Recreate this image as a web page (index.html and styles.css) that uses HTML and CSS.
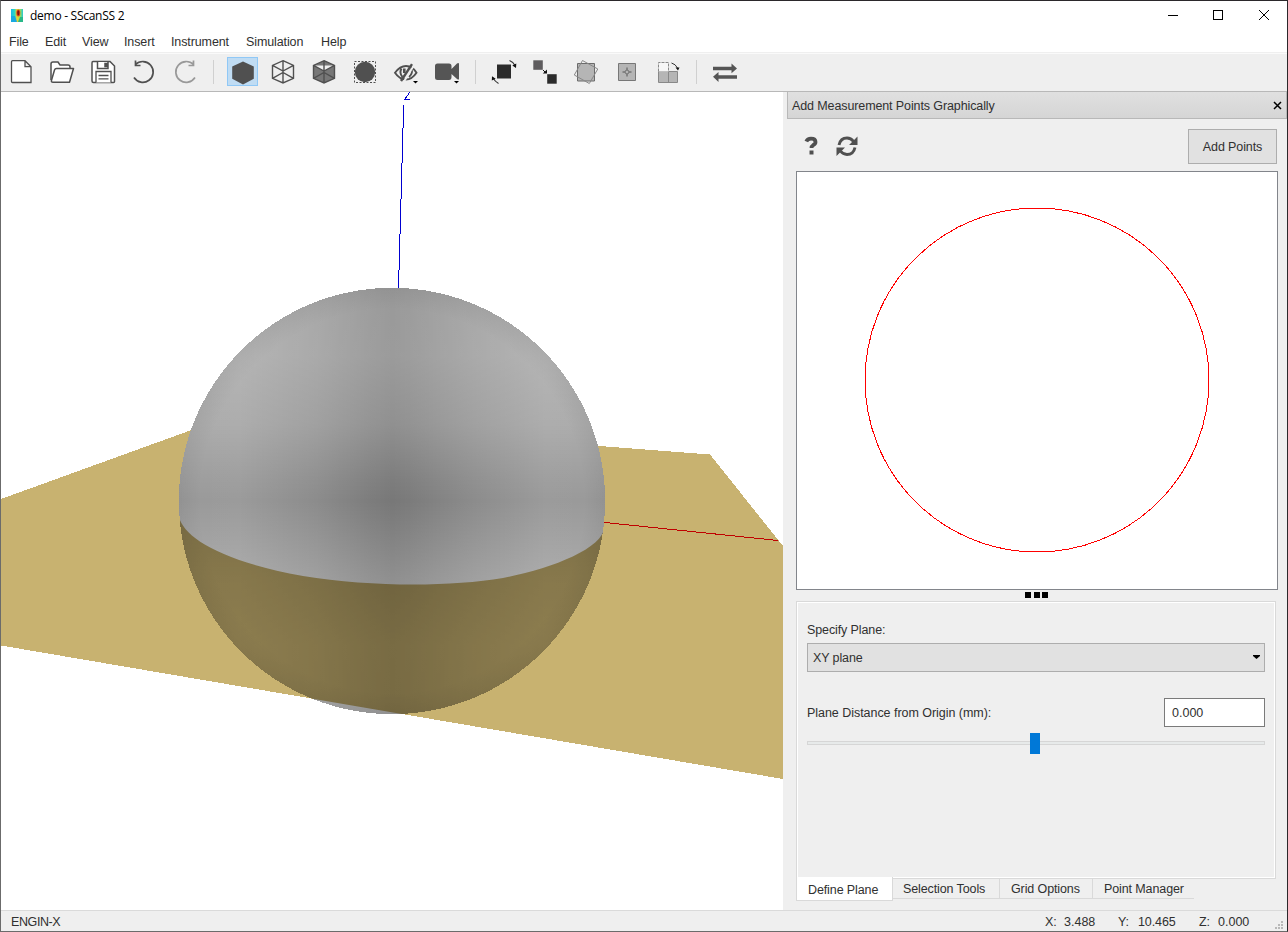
FILE: index.html
```html
<!DOCTYPE html>
<html lang="en">
<head>
<meta charset="utf-8">
<title>demo - SScanSS 2</title>
<link rel="stylesheet" href="styles.css">
</head>
<body>
<div class="window">
  <header class="titlebar">
    <svg class="app-icon" width="12" height="13" viewBox="0 0 12 13">
      <defs>
        <linearGradient id="heat"><stop offset="0" stop-color="#18b8e8"/><stop offset=".3" stop-color="#30d8c0"/><stop offset=".5" stop-color="#f0d030"/><stop offset=".75" stop-color="#a0e050"/><stop offset="1" stop-color="#20c8d8"/></linearGradient>
      </defs>
      <rect width="12" height="13" fill="url(#heat)"/>
      <path d="M0 7h4l2 6H0z" fill="#18a8e0"/><path d="M7 13l2-5h3v5z" fill="#28b888"/>
      <ellipse cx="7.3" cy="4" rx="2" ry="3.6" fill="#e85018"/><ellipse cx="7.3" cy="3.8" rx="1.1" ry="2.6" fill="#801010"/>
    </svg>
    <span class="title">demo - SScanSS 2</span>
    <svg class="controls" width="104" height="12" viewBox="0 0 104 12" fill="none" stroke="#000" shape-rendering="crispEdges">
      <path d="M1 6.500h10M46.500 1.500h9v9h-9z"/><path d="M92 1l10 10M102 1L92 11" shape-rendering="auto"/>
    </svg>
  </header>
  <nav class="menubar">
    <span class="m-file">File</span><span class="m-edit">Edit</span><span class="m-view">View</span><span class="m-insert">Insert</span><span class="m-instr">Instrument</span><span class="m-sim">Simulation</span><span>Help</span>
  </nav>
  <div class="toolbar">
    <svg class="tool" viewBox="0 0 31 29"><path d="M6.500 3.700H19l6 6V25.500H6.500q-1 0-1-1V4.700q0-1 1-1zM19 3.700v6h6" fill="#fff" stroke="#505050" stroke-width="1.300"/></svg>
    <svg class="tool" viewBox="0 0 31 29"><path d="M4 23V7q0-2 2-2h5l2 3h8q2 0 2 2v2" fill="#fff" stroke="#505050" stroke-width="1.500"/><path d="M9.500 11.500H26.500L22.500 25.200H6q-2 0-1.500-2L7.500 13q.5-1.500 2-1.500z" fill="#fff" stroke="#505050" stroke-width="1.500" stroke-linejoin="round"/></svg>
    <svg class="tool" viewBox="0 0 31 29"><g fill="#fff" stroke="#505050" stroke-width="1.500"><path d="M5 4.500h17l4.500 4.500v15.500q0 1-1 1h-20q-1.500 0-1.500-1.500V6q0-1.500 1-1.500z"/><path d="M9.500 5v6.500h10.500V5M17 6.500h1.500v3H17z"/><path d="M8 25.500V14.500h15v11M10.500 18.500h10M10.500 21.800h10" stroke-width="1.300"/></g></svg>
    <svg class="tool" viewBox="0 0 31 29"><path d="M6.500 7.500A10.400 10.400 0 1 1 5 20.500M6.500 3.500v5h5" fill="none" stroke="#505050" stroke-width="1.700"/></svg>
    <svg class="tool" viewBox="0 0 31 29"><path d="M23.500 7.500A10.400 10.400 0 1 0 25 20.500M23.500 3.500v5h-5" fill="none" stroke="#999" stroke-width="1.700"/></svg>
    <i class="sep"></i>
    <svg class="tool active" viewBox="0 0 31 29"><path d="M16 4.500l10.800 5v12.300L16 27.500 5.200 21.800V9.500z" fill="#505050"/></svg>
    <svg class="tool" viewBox="0 0 31 29"><path d="M15 3.700l10.500 4.700v13L15 26 4.500 21.400v-13zM15 3.700V26M4.500 8.400L15 14l10.500-5.600M4.500 21.400L15 15.500l10.500 5.900" fill="none" stroke="#505050" stroke-width="1.400"/></svg>
    <svg class="tool" viewBox="0 0 31 29"><path d="M15 3.700l10.500 4.700v13L15 26 4.500 21.400v-13zM15 3.700V26M4.500 8.400L15 14l10.500-5.600M4.500 21.400L15 15.500l10.500 5.900" fill="#777" stroke="#505050" stroke-width="1.400"/></svg>
    <svg class="tool" viewBox="0 0 31 29"><path d="M4.500 4.500h21v21h-21z" fill="none" stroke="#505050" stroke-dasharray="2 1.500"/><circle cx="15" cy="15" r="10.200" fill="#505050"/></svg>
    <svg class="tool" viewBox="0 0 31 29"><path d="M4 15.800Q9 9 15 9q6.500 0 10.500 6.800Q21 22.500 15 22.500 8.500 22.500 4 15.800zM10.500 11.500q-2.500 4.500 1 8.500M20 11.500q2.500 4.500-2 8.500" fill="none" stroke="#505050" stroke-width="1.900"/><path d="M13.300 11.500v4.500" stroke="#505050" stroke-width="2.600"/><path d="M13 24.500L22.500 9" stroke="#efefef" stroke-width="2"/><path d="M10 24L21 7.200" stroke="#505050" stroke-width="2.400"/><path d="M22 24h5l-2.500 2.500z" fill="#000"/></svg>
    <svg class="tool" viewBox="0 0 31 29"><path d="M5.500 6.500h11.500q2.500 0 2.500 2.500v3l5.500-5.500q2-1 2 .500v15q0 1-2 0l-5.500-5v3q0 3-2.500 3H5.500Q3 23 3 20.500V9q0-2.500 2.500-2.500z" fill="#555"/><path d="M22 24h5l-2.500 2.500z" fill="#000"/></svg>
    <i class="sep"></i>
    <svg class="tool" viewBox="0 0 31 29"><path d="M8 7.500h14v14H8z" fill="#2b2b2b"/><path d="M20.500 3.500q4 1.500 5.500 5M4 21q2 3.500 5.500 5.500" fill="none" stroke="#333" stroke-width="1.100"/><path d="M27.300 6.500l-.3 4.500-3.700-2.500zM2.800 23.500L3 19.200l3.700 2.500z" fill="#111"/></svg>
    <svg class="tool" viewBox="0 0 31 29"><path d="M3.300 3.300h9.500v9.500H3.300z" fill="#5e5c5e"/><path d="M17.200 17.200h9.500v9.500h-9.500z" fill="#2b2b2b"/><path d="M13 13l2 2" stroke="#111"/><path d="M17 12.500V16.500h-4.200z" fill="#111"/></svg>
    <svg class="tool" viewBox="0 0 31 29"><path d="M6.500 6.500h17v17.500h-17z" fill="#b5b5b5" stroke="#6b6b6b"/><path d="M11.500 3.500l15.300 8.500-8.500 14.500L3.300 18z" fill="none" stroke="#888"/></svg>
    <svg class="tool" viewBox="0 0 31 29"><path d="M6.500 6.500h17v17h-17z" fill="#b5b5b5" stroke="#777"/><path d="M15 10.500v3M15 16.500v3M10.500 15h3M16.500 15h3" stroke="#555"/><circle cx="15" cy="15" r="2" fill="none" stroke="#777"/></svg>
    <svg class="tool" viewBox="0 0 31 29"><path d="M5.500 14.500h19v11h-19z" fill="#b5b5b5" stroke="#888"/><path d="M5.500 14.500v-9h10v9" fill="#f6f6f6" stroke="#888" stroke-dasharray="3 1"/><path d="M15.500 15v10" stroke="#888"/><path d="M18.500 6q4 1 6 5" fill="none" stroke="#333"/><path d="M22.500 10.500h4L25 13.500z" fill="#111"/></svg>
    <i class="sep"></i>
    <svg class="tool" viewBox="0 0 31 29"><path d="M3 9.800h18.500V6.500L27 11.500l-5.500 4.700V13.300H3zM27 18.200H8.500V15L3 19.800 8.500 25v-3.300H27z" fill="#555"/></svg>
  </div>
  <main class="workspace">
    <svg class="scene" width="782" height="818" viewBox="1 92 782 818">
      <defs>
        <linearGradient id="sideLight" gradientUnits="userSpaceOnUse" x1="179" y1="0" x2="605" y2="0">
          <stop offset="0" stop-color="#fff" stop-opacity=".25"/><stop offset=".14" stop-color="#fff" stop-opacity=".26"/><stop offset=".32" stop-color="#fff" stop-opacity=".15"/><stop offset=".45" stop-color="#fff" stop-opacity=".035"/><stop offset=".5" stop-color="#fff" stop-opacity="0"/><stop offset=".54" stop-color="#fff" stop-opacity=".025"/><stop offset=".68" stop-color="#fff" stop-opacity=".14"/><stop offset=".86" stop-color="#fff" stop-opacity=".26"/><stop offset="1" stop-color="#fff" stop-opacity=".25"/>
        </linearGradient>
        <linearGradient id="topLight" gradientUnits="userSpaceOnUse" x1="0" y1="288" x2="0" y2="714">
          <stop offset="0" stop-color="#fff" stop-opacity=".25"/><stop offset=".16" stop-color="#fff" stop-opacity=".26"/><stop offset=".32" stop-color="#fff" stop-opacity=".18"/><stop offset=".45" stop-color="#fff" stop-opacity=".04"/><stop offset=".5" stop-color="#fff" stop-opacity="0"/><stop offset=".54" stop-color="#fff" stop-opacity=".035"/><stop offset=".68" stop-color="#fff" stop-opacity=".17"/><stop offset=".84" stop-color="#fff" stop-opacity=".25"/><stop offset="1" stop-color="#fff" stop-opacity=".24"/>
        </linearGradient>
        <radialGradient id="rim"><stop offset=".9" stop-color="#000" stop-opacity="0"/><stop offset="1" stop-color="#000" stop-opacity=".05"/></radialGradient>
        <clipPath id="front"><path d="M170 500L179 517C184 537 220 561 303 576C370 587 450 587 503 578C550 569 603 549 604.500 527L620 500V751.200L170 674.400z"/></clipPath>
      </defs>
      <path d="M1 499L244 411L600 446L710 454.500L783 546V779L1 645.500z" fill="#c8b270" shape-rendering="crispEdges"/>
      <path d="M600 522L778 540.500" stroke="#c00000" shape-rendering="crispEdges"/>
      <path d="M403.500 105v5L398.500 288M410 92L404.500 99.500h5.500" fill="none" stroke="#0000d0" shape-rendering="crispEdges"/>
      <g shape-rendering="crispEdges">
        <circle cx="392" cy="501" r="213.200" fill="#787878"/>
        <circle cx="392" cy="501" r="213.200" fill="url(#sideLight)"/>
        <circle cx="392" cy="501" r="213.200" fill="url(#topLight)"/>
        <circle cx="392" cy="501" r="213.200" fill="url(#rim)"/>
      </g>
      <circle class="plane-shade" cx="392" cy="501" r="213.200" fill="#c8b270" clip-path="url(#front)" shape-rendering="crispEdges"/>
    </svg>
    <aside class="dock">
      <div class="dock-title"><span>Add Measurement Points Graphically</span>
        <svg width="9" height="9" viewBox="0 0 9 9"><path d="M1 1l7 7M8 1L1 8" stroke="#000" stroke-width="1.500"/></svg>
      </div>
      <div class="dock-body">
        <div class="actions">
          <svg width="60" height="24" viewBox="0 0 60 24">
            <path d="M3.300 7.500Q4.500 4.700 8 4.700q4.500 0 4.500 3.300 0 1.800-2.200 3Q8.500 12.200 8.500 14" fill="none" stroke="#505050" stroke-width="3.800"/><path d="M6.500 16.500h4v4h-4z" fill="#505050"/>
            <path d="M36 11q1.500-7 8-7 4 0 6.500 3.500M52 13.500q-1.500 7-8 7-4 0-6.500-3.500" fill="none" stroke="#505050" stroke-width="2.900"/><path d="M54.500 2.500v8.500H46zM33.500 22v-8.500H42z" fill="#505050"/>
          </svg>
          <button class="add">Add Points</button>
        </div>
        <svg class="cross-section" width="480" height="417" viewBox="797 172 480 417"><circle cx="1037" cy="380" r="172" fill="none" stroke="#ff0000" shape-rendering="crispEdges"/></svg>
        <div class="grip"><i></i><i></i><i></i></div>
        <section class="pane">
          <label class="plane-label">Specify Plane:</label>
          <div class="select"><span>XY plane</span><svg width="7" height="4" viewBox="0 0 7 4"><path d="M0 0h7v1L3.500 4 0 1z"/></svg></div>
          <div class="distance"><label>Plane Distance from Origin (mm):</label><div class="field">0.000</div></div>
          <div class="slider"><div class="track"></div><div class="thumb"></div></div>
        </section>
        <div class="tabs"><span class="tab current">Define Plane</span><span class="tab t-sel">Selection Tools</span><span class="tab t-grid">Grid Options</span><span class="tab t-point">Point Manager</span></div>
      </div>
    </aside>
  </main>
  <footer class="status">
    <span class="instrument">ENGIN-X</span><span class="cx">X:</span><span class="vx">3.488</span><span class="cy">Y:</span><span class="vy">10.465</span><span class="cz">Z:</span><span class="vz">0.000</span>
    <svg width="9" height="9" viewBox="0 0 9 9" fill="#b8b8b8"><path d="M6 0h2v2H6zM3 3h2v2H3zM6 3h2v2H6zM0 6h2v2H0zM3 6h2v2H3zM6 6h2v2H6z"/></svg>
  </footer>
</div>
</body>
</html>
```
FILE: styles.css
```css
* { box-sizing: border-box; }
body { margin: 0; font: 12.5px/14px "Liberation Sans", Arial, sans-serif; letter-spacing: -.11px; color: #303030; }
svg { display: block; flex: none; }
.window { width: 1288px; height: 932px; display: flex; flex-direction: column; background: #efefef; border: 1px solid #2b282b; border-left-color: #6b6b6b; border-bottom-color: #6b6b6b; overflow: hidden; white-space: nowrap; }
.titlebar { height: 31px; background: #fff; display: flex; align-items: center; padding: 0 16px 2px 10px; flex: none; }
.title { font: 12px/16px "Open Sans", "Noto Sans", sans-serif; letter-spacing: -.27px; color: #000; margin-left: 7px; }
.controls { margin: -1px 0 0 auto; }
.menubar { height: 21px; background: #fff; border-bottom: 1px solid #efefef; box-shadow: 0 1px #fafafa; padding: 3px 0 0 8px; display: flex; flex: none; }
.m-file { width: 36px; } .m-edit { width: 37px; } .m-view { width: 42px; } .m-insert { width: 47px; } .m-instr { width: 75px; } .m-sim { width: 75px; }
.toolbar { height: 39px; flex: none; display: flex; gap: 10px; padding: 4px 0 0 5px; border-bottom: 1px solid #b8b8b8; }
.tool { width: 31px; height: 29px; }
.tool.active { background: #c0dcf3; box-shadow: inset 0 0 0 1px #90c8f6; }
.sep { width: 6px; height: 24px; margin-top: 3px; background: linear-gradient(#d0d0d0, #d0d0d0) 2px 0 / 1px 100% no-repeat; }
.workspace { display: flex; height: 818px; flex: none; }
.scene { background: #fff; isolation: isolate; }
.plane-shade { mix-blend-mode: multiply; }
.dock { flex: 1; padding-left: 4px; }
.dock-title { height: 27px; display: flex; align-items: center; justify-content: space-between; padding: 1px 4px 0; border: 1px solid #b8b8b8; border-top: 0; background: linear-gradient(#e0e0e0, #d5d5d5); }
.dock-body { padding: 10px 9px 0; }
.actions { display: flex; justify-content: space-between; height: 42px; padding-right: 1px; }
.actions svg { margin: 5px 0 0 7px; }
.add { width: 89px; height: 35px; border: 1px solid #adadad; background: #e1e1e1; padding: 0; font: inherit; letter-spacing: inherit; color: inherit; }
.cross-section { box-sizing: content-box; border: 1px solid #82858b; background: #fff; }
.grip { height: 11px; display: flex; padding: 2px 0 0 229px; gap: 3px; }
.grip i { width: 6px; height: 6px; background: #000; }
.grip i + i + i { margin-left: -1px; }
.pane { width: 480px; height: 278px; border: 1px solid #d9d9d9; box-shadow: inset 0 0 0 1px #fff; padding: 21px 10px 0 10px; }
.plane-label { display: block; }
.select { margin-top: 6px; height: 29px; border: 1px solid #adadad; background: #e1e1e1; display: flex; align-items: center; justify-content: space-between; padding: 0 4px 0 5px; }
.select svg { margin-top: -1px; }
.distance { display: flex; justify-content: space-between; align-items: center; margin-top: 26px; }
.distance label { letter-spacing: -.04px; }
.field { width: 101px; height: 29px; border: 1px solid #7a7a7a; background: #fff; padding: 7px; letter-spacing: 0; }
.slider { height: 21px; margin-top: 6px; display: grid; align-items: start; }
.track, .thumb { grid-area: 1 / 1; }
.track { height: 4px; margin-top: 8px; border: 1px solid #d6d6d6; background: #e7eaea; }
.thumb { width: 10px; height: 21px; background: #0078d7; margin-left: 223px; }
.tabs { display: flex; margin-top: -2px; align-items: flex-start; position: relative; }
.tab { height: 20px; margin-top: 2px; border-bottom: 1px solid #d9d9d9; border-right: 1px solid #d9d9d9; padding: 3px 0 0 10px; }
.tab.current { width: 97px; height: 24px; margin-top: 0; background: #fff; border-left: 1px solid #d9d9d9; padding: 6px 0 0 11px; }
.t-sel { width: 107px; } .t-grid { width: 93px; padding-left: 11px; } .t-point { width: 101px; border-right: 0; padding-left: 11px; }
.status { height: 21px; flex: none; border-top: 1px solid #dadada; display: flex; padding: 4px 0 0 10px; }
.instrument { width: 1034px; letter-spacing: -.4px; }
.cx { width: 19px; } .vx { width: 54px; letter-spacing: 0; } .cy { width: 20px; } .vy { width: 61px; letter-spacing: -.1px; } .cz { width: 19px; } .vz { width: 57px; letter-spacing: 0; }
.status svg { margin-top: 6px; }
```
